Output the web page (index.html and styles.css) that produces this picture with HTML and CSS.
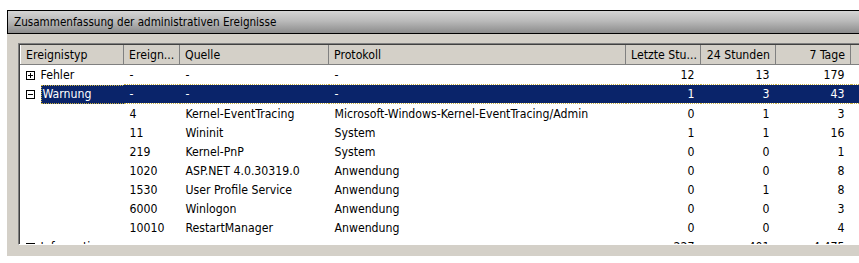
FILE: index.html
```html
<!doctype html>
<html>
<head>
<meta charset=utf8>
<title>Ereignisse</title>
<link rel="stylesheet" href="styles.css">
</head>
<body>
<div class="section">
  <div class="section-title">Zusammenfassung der administrativen Ereignisse</div>
  <div class="section-body">
    <div class="list">
      <table>
        <colgroup>
          <col style="width:103px"><col style="width:56px"><col style="width:149px"><col style="width:297px">
          <col style="width:75px"><col style="width:75px"><col style="width:75px"><col style="width:60px">
        </colgroup>
        <thead>
          <tr>
            <th>Ereignistyp</th><th>Ereign...</th><th>Quelle</th><th>Protokoll</th>
            <th class="num">Letzte Stu...</th><th class="num">24 Stunden</th><th class="num">7 Tage</th><th></th>
          </tr>
        </thead>
        <tbody>
          <tr>
            <td><svg class="tog" width="9" height="9" viewBox="0 0 9 9"><rect x="0.5" y="0.5" width="8" height="8" fill="#fff" stroke="#000"/><path d="M2 4.5h5M4.5 2v5" stroke="#000"/></svg>Fehler</td><td>-</td><td>-</td><td>-</td>
            <td class="num">12</td><td class="num">13</td><td class="num">179</td><td></td>
          </tr>
          <tr class="sel">
            <td><svg class="tog" width="9" height="9" viewBox="0 0 9 9"><rect x="0.5" y="0.5" width="8" height="8" fill="#fff" stroke="#000"/><path d="M2 4.5h5" stroke="#000"/></svg><span class="first">Warnung</span></td><td>-</td><td>-</td><td>-</td>
            <td class="num">1</td><td class="num">3</td><td class="num">43</td><td></td>
          </tr>
          <tr><td></td><td>4</td><td>Kernel-EventTracing</td><td>Microsoft-Windows-Kernel-EventTracing/Admin</td><td class="num">0</td><td class="num">1</td><td class="num">3</td><td></td></tr>
          <tr><td></td><td>11</td><td>Wininit</td><td>System</td><td class="num">1</td><td class="num">1</td><td class="num">16</td><td></td></tr>
          <tr><td></td><td>219</td><td>Kernel-PnP</td><td>System</td><td class="num">0</td><td class="num">0</td><td class="num">1</td><td></td></tr>
          <tr><td></td><td>1020</td><td>ASP.NET 4.0.30319.0</td><td>Anwendung</td><td class="num">0</td><td class="num">0</td><td class="num">8</td><td></td></tr>
          <tr><td></td><td>1530</td><td>User Profile Service</td><td>Anwendung</td><td class="num">0</td><td class="num">1</td><td class="num">8</td><td></td></tr>
          <tr><td></td><td>6000</td><td>Winlogon</td><td>Anwendung</td><td class="num">0</td><td class="num">0</td><td class="num">3</td><td></td></tr>
          <tr><td></td><td>10010</td><td>RestartManager</td><td>Anwendung</td><td class="num">0</td><td class="num">0</td><td class="num">4</td><td></td></tr>
          <tr>
            <td><svg class="tog" width="9" height="9" viewBox="0 0 9 9"><rect x="0.5" y="0.5" width="8" height="8" fill="#fff" stroke="#000"/><path d="M2 4.5h5M4.5 2v5" stroke="#000"/></svg>Informationen</td><td>-</td><td>-</td><td>-</td>
            <td class="num">227</td><td class="num">401</td><td class="num">4.475</td><td></td>
          </tr>
        </tbody>
      </table>
    </div>
  </div>
</div>
</body>
</html>
```

FILE: styles.css
```css
html, body {
    margin: 0;
    padding: 0;
    background: #fff;
    overflow: hidden;
}
body {
    font-family: "DejaVu Sans Condensed", "DejaVu Sans", sans-serif;
    font-size: 12.2px;
    color: #000;
}
.section {
    margin: 10px 0 0 7px;
    width: 900px;
}
.section-title {
    height: 22px;
    line-height: 22px;
    border: 1px solid #000;
    border-right: 0;
    padding-left: 6px;
    font-size: 11.6px;
    background: linear-gradient(#d4d4d4, #bababa 45%, #8c8c8c);
}
.section-body {
    background: #d4d0c8;
    padding: 9px 0 11px 11px;
}
.list {
    height: 199px;
    overflow: hidden;
    background: #fff;
    border-top: 1px solid #808080;
    border-left: 1px solid #808080;
    box-shadow: inset 1px 1px 0 #404040;
    border-bottom: 1px solid #fff;
    padding: 1px 0 0 1px;
}
table {
    border-collapse: collapse;
    table-layout: fixed;
    width: 890px;
}
th {
    font-weight: normal;
    text-align: left;
    background: #d4d0c8;
    height: 19px;
    padding: 0 5px;
    border-left: 1px solid #fff;
    border-right: 1px solid #808080;
    border-bottom: 1px solid #808080;
    white-space: nowrap;
    overflow: hidden;
}
td {
    height: 19px;
    padding: 0 6px;
    white-space: nowrap;
    overflow: hidden;
}
.num {
    text-align: right;
}
td:first-child {
    padding-left: 5px;
}
.tog {
    vertical-align: -1px;
    margin-right: 6px;
}
tr.sel td {
    height: 17px;
    background: #0a246a;
    color: #fff;
    border-top: 1px dotted #c8b040;
    border-bottom: 1px dotted #c8b040;
}
tr.sel td:first-child {
    background: #fff;
    color: #000;
    border-top: 0;
    border-bottom: 0;
    padding-right: 0;
}
tr.sel .first {
    display: inline-block;
    background: #0a246a;
    color: #fff;
    width: 100%;
    line-height: 17px;
    border-top: 1px dotted #c8b040;
    border-bottom: 1px dotted #c8b040;
    border-left: 1px dotted #c8b040;
    padding-left: 1px;
}
```
